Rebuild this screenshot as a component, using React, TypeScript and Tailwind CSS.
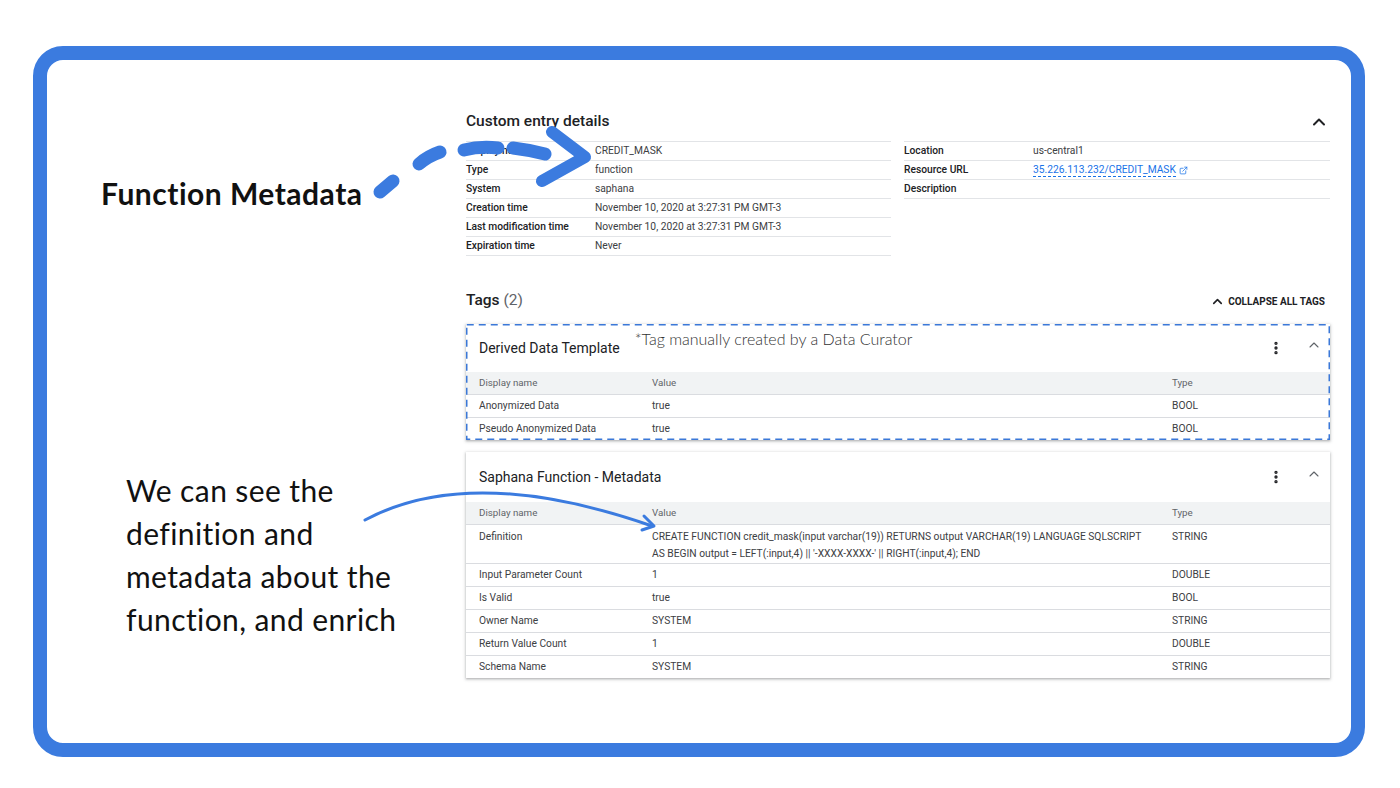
import { ChevronUp, EllipsisVertical, ExternalLink } from "lucide-react"

const leftRows: [string, string][] = [
  ["Display name", "CREDIT_MASK"],
  ["Type", "function"],
  ["System", "saphana"],
  ["Creation time", "November 10, 2020 at 3:27:31 PM GMT-3"],
  ["Last modification time", "November 10, 2020 at 3:27:31 PM GMT-3"],
  ["Expiration time", "Never"],
]

const derivedRows: [string, string, string][] = [
  ["Anonymized Data", "true", "BOOL"],
  ["Pseudo Anonymized Data", "true", "BOOL"],
]

const saphanaRows: [string, string, string][] = [
  ["Input Parameter Count", "1", "DOUBLE"],
  ["Is Valid", "true", "BOOL"],
  ["Owner Name", "SYSTEM", "STRING"],
  ["Return Value Count", "1", "DOUBLE"],
  ["Schema Name", "SYSTEM", "STRING"],
]

function DetailRow({ label, children }: { label: string; children?: React.ReactNode }) {
  return (
    <div className="flex h-[19px] items-center border-b border-[#e2e4e7] text-[10.25px]">
      <div className="w-[129px] shrink-0 font-medium text-[#202124]">{label}</div>
      <div className="text-[#3c4043]">{children}</div>
    </div>
  )
}

function CardHeader({ title, note }: { title: string; note?: string }) {
  return (
    <div className="flex h-full items-center pl-[13px] pr-[8px]">
      <span className="text-[14px] text-[#202124]">{title}</span>
      {note && (
        <span className="mb-[18px] ml-[15px] font-['Lato',sans-serif] text-[16px] font-light text-[#333]">
          {note}
        </span>
      )}
      <div className="ml-auto flex items-center gap-[22px]">
        <EllipsisVertical size={16} strokeWidth={3} className="text-[#202124]" />
        <ChevronUp size={16} strokeWidth={1.6} className="-mt-[6px] text-[#5f6368]" />
      </div>
    </div>
  )
}

function TableHead() {
  return (
    <div className="flex h-[22px] items-center bg-[#f1f3f4] px-[13px] text-[9.75px] text-[#5f6368]">
      <div className="w-[173px] shrink-0">Display name</div>
      <div className="w-[520px] shrink-0">Value</div>
      <div>Type</div>
    </div>
  )
}

function TagRow({ row }: { row: [string, string, string] }) {
  return (
    <div className="flex h-[23px] items-center whitespace-nowrap border-t border-[#dadce0] px-[13px] text-[10.25px] text-[#3c4043]">
      <div className="w-[173px] shrink-0">{row[0]}</div>
      <div className="w-[520px] shrink-0">{row[1]}</div>
      <div>{row[2]}</div>
    </div>
  )
}

const cardShadow =
  "shadow-[0_1px_2px_rgba(60,64,67,0.3),0_1px_3px_1px_rgba(60,64,67,0.15)]"

export default function App() {
  return (
    <div className="relative h-[788px] w-[1400px] overflow-hidden bg-white pl-[33px] pt-[46px] font-['Roboto',sans-serif]">
      <div className="flex h-[711px] w-[1332px] rounded-[30px] border-[14px] border-[#3b7bdf] bg-white">
        {/* annotations */}
        <div className="flex w-[419px] shrink-0 flex-col font-['Lato',sans-serif] text-[#111]">
          <div className="ml-[54px] mt-[115px] text-[30px] font-bold leading-[36px] tracking-[0.5px]">Function Metadata</div>
          <div className="ml-[79px] mt-[258px] text-[30px] leading-[43px] tracking-[0.4px]">
            We can see the
            <br />
            definition and
            <br />
            metadata about the
            <br />
            function, and enrich
          </div>
        </div>

        {/* catalog panel */}
        <div className="w-[864px] shrink-0 pt-[50px]">
          <div className="flex h-[24px] items-center justify-between">
            <h2 className="text-[15.5px] font-medium text-[#202124]">Custom entry details</h2>
            <ChevronUp size={20} strokeWidth={2.4} className="mr-[1px] text-[#202124]" />
          </div>
          <div className="mt-[7px] flex gap-[13px]">
            <div className="w-[425px] border-t border-[#e2e4e7]">
              {leftRows.map(([l, v]) => (
                <DetailRow key={l} label={l}>
                  {v}
                </DetailRow>
              ))}
            </div>
            <div className="w-[426px] self-start border-t border-[#e2e4e7]">
              <DetailRow label="Location">us-central1</DetailRow>
              <DetailRow label="Resource URL">
                <span className="flex items-center gap-[3px] text-[#1a73e8]">
                  <span className="border-b border-dashed border-[#1a73e8] leading-[12px]">35.226.113.232/CREDIT_MASK</span>
                  <ExternalLink size={9} strokeWidth={2} />
                </span>
              </DetailRow>
              <DetailRow label="Description" />
            </div>
          </div>

          <div className="mt-[33px] flex h-[24px] items-center justify-between">
            <h2 className="text-[15.5px] font-medium text-[#202124]">
              Tags <span className="font-normal text-[#5f6368]">(2)</span>
            </h2>
            <div className="mr-[5px] flex items-center gap-[3px] text-[10px] font-bold text-[#202124]">
              <ChevronUp size={15} strokeWidth={2.6} />
              COLLAPSE ALL TAGS
            </div>
          </div>

          <div className={`relative mt-[11px] bg-white ${cardShadow}`}>
            <div className="h-[48px]">
              <CardHeader title="Derived Data Template" note="*Tag manually created by a Data Curator" />
            </div>
            <TableHead />
            {derivedRows.map((r) => (
              <TagRow key={r[0]} row={r} />
            ))}
            <svg className="pointer-events-none absolute inset-0 h-full w-full overflow-visible">
              <rect
                x="0.75"
                y="0.75"
                width="calc(100% - 1.5px)"
                height="calc(100% - 1.5px)"
                fill="none"
                stroke="#3b78d8"
                strokeWidth="1.5"
                strokeDasharray="7 5"
              />
            </svg>
          </div>

          <div className={`mt-[12px] bg-white ${cardShadow}`}>
            <div className="h-[50px]">
              <CardHeader title="Saphana Function - Metadata" />
            </div>
            <TableHead />
            <div className="flex h-[39px] items-start whitespace-nowrap border-t border-[#dadce0] px-[13px] pt-[3px] text-[10.25px] leading-[17px] text-[#3c4043]">
              <div className="w-[173px] shrink-0">Definition</div>
              <div className="w-[520px] shrink-0">
                CREATE FUNCTION credit_mask(input varchar(19)) RETURNS output VARCHAR(19) LANGUAGE SQLSCRIPT
                <br />
                AS BEGIN output = LEFT(:input,4) || &apos;-XXXX-XXXX-&apos; || RIGHT(:input,4); END
              </div>
              <div>STRING</div>
            </div>
            {saphanaRows.map((r) => (
              <TagRow key={r[0]} row={r} />
            ))}
          </div>
        </div>
      </div>

      {/* hand-drawn arrows */}
      <svg className="pointer-events-none absolute left-0 top-0 h-[788px] w-[1400px]" fill="none" stroke="#3b7bdf" strokeLinecap="round" strokeLinejoin="round">
        <path d="M380 192 L393 181" strokeWidth="13" />
        <path d="M419 164 Q428 156 440 152" strokeWidth="13" />
        <path d="M464 150 Q480 146 498 148" strokeWidth="13" />
        <path d="M513 148 Q530 150 545 154" strokeWidth="13" />
        <path d="M552 132 L585 157 L542 181" strokeWidth="12" />
        <path d="M365 520 Q471 463 652 526" strokeWidth="3" />
        <path d="M644 516 L654 526 L642 530" strokeWidth="3" />
      </svg>
    </div>
  )
}
